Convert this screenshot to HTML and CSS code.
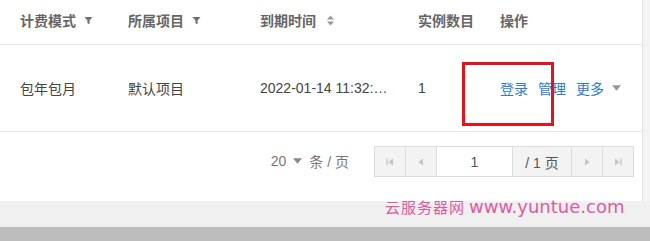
FILE: index.html
```html
<!DOCTYPE html>
<html lang="zh">
<head>
<meta charset="utf-8">
<link rel="stylesheet" href="styles.css">
</head>
<body>
<div class="page">
  <div class="panel">
    <div class="row head">
      <div class="cell">计费模式<svg class="ico" viewBox="0 0 10 10"><path d="M0.5 1h9L6.2 5v4.2L3.8 8V5z" fill="#707070"/></svg></div>
      <div class="cell">所属项目<svg class="ico" viewBox="0 0 10 10"><path d="M0.5 1h9L6.2 5v4.2L3.8 8V5z" fill="#707070"/></svg></div>
      <div class="cell">到期时间<svg class="ico sort" viewBox="0 0 10 12"><path d="M5 0.5l4 4.5h-8zM5 11.5l4-4.5h-8z" fill="#9a9a9a"/></svg></div>
      <div class="cell">实例数目</div>
      <div class="cell">操作</div>
    </div>
    <div class="row body">
      <div class="cell">包年包月</div>
      <div class="cell">默认项目</div>
      <div class="cell">2022-01-14 11:32:…</div>
      <div class="cell">1</div>
      <div class="cell ops"><a>登录</a><a>管理</a><a>更多</a><svg class="caret" viewBox="0 0 10 6"><path d="M0 0h10L5 6z" fill="#999"/></svg></div>
    </div>
    <div class="pager">
      <div class="size">20<svg class="caret small" viewBox="0 0 10 6"><path d="M0 0h10L5 6z" fill="#888"/></svg>条 / 页</div>
      <div class="pbox">
        <div class="pbtn"><svg viewBox="0 0 10 10"><rect x="1.5" y="1.5" width="1.2" height="7" fill="#c4c4c4"/><path d="M8 1.5v7L3.5 5z" fill="#c4c4c4"/></svg></div>
        <div class="pbtn"><svg viewBox="0 0 10 10"><path d="M7 1.5v7L2.5 5z" fill="#c4c4c4"/></svg></div>
        <div class="pinput">1</div>
        <div class="ptotal">/ 1 页</div>
        <div class="pbtn"><svg viewBox="0 0 10 10"><path d="M3 1.5v7L7.5 5z" fill="#c4c4c4"/></svg></div>
        <div class="pbtn"><svg viewBox="0 0 10 10"><path d="M2 1.5v7L6.5 5z" fill="#c4c4c4"/><rect x="7.3" y="1.5" width="1.2" height="7" fill="#c4c4c4"/></svg></div>
      </div>
    </div>
  </div>
  <div class="band"></div>
  <div class="foot"></div>
  <div class="highlight"></div>
  <div class="mark"><span class="zh">云服务器网</span> <span class="url">www.yuntue.com</span></div>
</div>
</body>
</html>
```

FILE: styles.css
```css
html, body { margin: 0; padding: 0; }
body {
  width: 650px;
  height: 241px;
  overflow: hidden;
  font-family: "Liberation Sans", Arial, "Noto Sans CJK SC", sans-serif;
  background: #f4f4f4;
}
.page { position: relative; width: 650px; height: 241px; }
.panel {
  width: 642px;
  height: 201px;
  background: #fff;
  border-right: 1px solid #e2e2e2;
  display: flex;
  flex-direction: column;
}
.row {
  display: grid;
  grid-template-columns: 108px 132px 158px 82px 1fr;
  padding-left: 20px;
  align-items: center;
  border-bottom: 1px solid #e6e6e6;
  font-size: 14px;
}
.head { height: 44px; color: #666; font-weight: bold; }
.head .cell { position: relative; top: -2px; display: flex; align-items: center; }
.body { height: 86px; color: #444; }
.body .cell { position: relative; top: 0px; }
.ico { width: 9px; height: 9px; margin-left: 8px; }
.ico.sort { width: 9px; height: 11px; margin-left: 10px; }
.ops { display: flex; align-items: center; color: #2a7bd6; }
.ops a { margin-right: 10px; }
.caret { width: 9px; height: 6px; margin-left: -2px; }
.caret.small { width: 9px; height: 6px; margin: 0 7px; }
.pager {
  flex: 1;
  display: flex;
  align-items: flex-start;
  justify-content: flex-end;
  padding: 14px 8px 0 0;
}
.size {
  display: flex;
  align-items: center;
  color: #777;
  font-size: 14px;
  height: 30px;
  margin-right: 25px;
}
.pbox {
  display: flex;
  height: 29px;
  border: 1px solid #dcdcdc;
  background: #f3f3f3;
  font-size: 14px;
  color: #555;
}
.pbtn {
  width: 30px;
  border-right: 1px solid #dcdcdc;
  display: flex;
  align-items: center;
  justify-content: center;
}
.pbtn:last-child { border-right: none; }
.pbtn svg { width: 10px; height: 10px; }
.pinput {
  width: 75px;
  background: #fff;
  border-right: 1px solid #dcdcdc;
  display: flex;
  align-items: center;
  justify-content: center;
}
.ptotal {
  width: 58px;
  border-right: 1px solid #dcdcdc;
  display: flex;
  align-items: center;
  justify-content: center;
}
.band { height: 26px; background: #f0f0f0; }
.foot { height: 14px; background: #bdbdbd; }
.highlight {
  position: absolute;
  left: 462px;
  top: 62px;
  width: 86px;
  height: 58px;
  border: 3px solid #e3141d;
}
.mark {
  position: absolute;
  left: 385px;
  top: 196px;
  color: #e25aa0;
  white-space: nowrap;
  display: flex;
  align-items: baseline;
}
.mark .zh {
  font-family: "Liberation Serif", "Noto Sans CJK SC", serif;
  font-size: 15px;
  letter-spacing: 1px;
  margin-right: 4px;
}
.mark .url {
  font-family: "DejaVu Sans", sans-serif;
  font-size: 18px;
}
```
